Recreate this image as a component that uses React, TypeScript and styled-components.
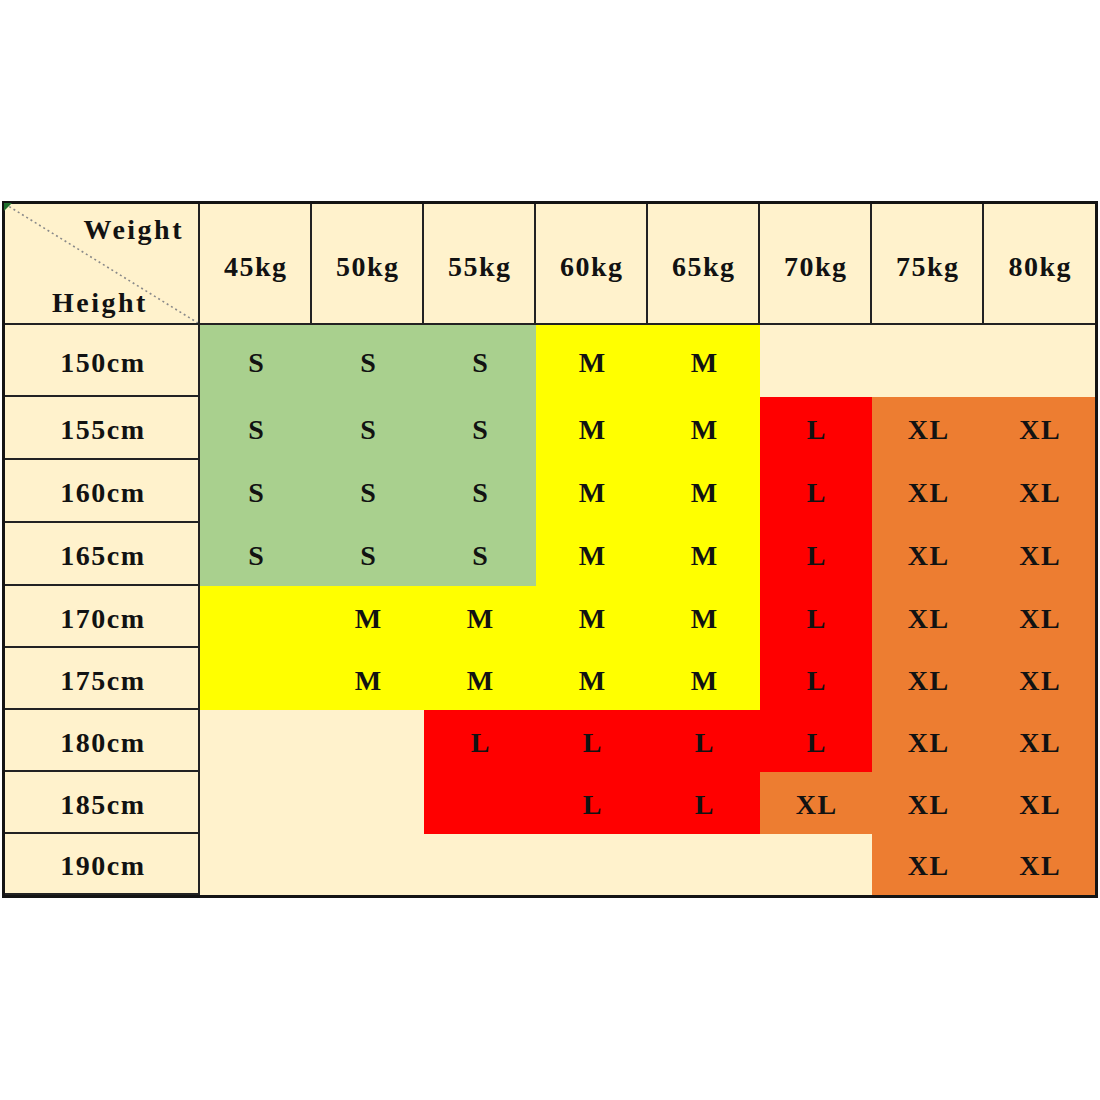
import React from "react";
import styled, { createGlobalStyle } from "styled-components";

const Global = createGlobalStyle`
  html, body { margin: 0; padding: 0; background: #ffffff; }
  body { font-family: "Liberation Serif", "Times New Roman", serif; }
`;

const COLORS: Record<string, string> = {
  c: "#FFF2CC",
  g: "#A9D08E",
  y: "#FFFF00",
  r: "#FF0000",
  o: "#ED7D31",
};

const Page = styled.div`
  padding: 201px 0 0 2px;
  height: 1100px;
  box-sizing: border-box;
`;

const Table = styled.div`
  width: 1096px;
  box-sizing: border-box;
  border: 3px solid #141414;
  background: #fff2cc;
  display: grid;
  grid-template-columns: 195px repeat(7, 112px) 111px;
  grid-template-rows: 121px 72px 63px 63px 63px 62px 62px 62px 62px 61px;
`;

const baseText = `
  font-family: "Liberation Serif", "Times New Roman", serif;
  font-weight: 700;
  font-size: 28px;
  line-height: 28px;
  letter-spacing: 1.5px;
  color: #121212;
  white-space: nowrap;
`;

const Corner = styled.div`
  position: relative;
  box-sizing: border-box;
  border-right: 2px solid #222;
  border-bottom: 2px solid #222;
  display: flex;
  flex-direction: column;
  justify-content: space-between;
  padding: 12px 14px 6px 47px;
  ${baseText}
  letter-spacing: 2.5px;
`;

const CornerTop = styled.span`
  align-self: flex-end;
`;

const CornerBottom = styled.span`
  align-self: flex-start;
`;

const Diagonal = styled.svg`
  position: absolute;
  left: 0;
  top: 0;
  width: 100%;
  height: 100%;
  pointer-events: none;
`;

const Marker = styled.div`
  position: absolute;
  left: -1px;
  top: -1px;
  width: 0;
  height: 0;
  border-top: 8px solid #1f6f2e;
  border-right: 8px solid transparent;
`;

const HeadCell = styled.div<{ $last?: boolean }>`
  box-sizing: border-box;
  border-right: ${(p) => (p.$last ? "none" : "2px solid #222")};
  border-bottom: 2px solid #222;
  display: flex;
  align-items: center;
  justify-content: center;
  padding: 6px 0 0 1.5px;
  ${baseText}
`;

const RowHead = styled.div`
  box-sizing: border-box;
  border-right: 2px solid #222;
  border-bottom: 2px solid #222;
  display: flex;
  align-items: center;
  justify-content: center;
  padding: 5px 0 0 3px;
  ${baseText}
`;

const DataCell = styled.div<{ $bg: string }>`
  background: ${(p) => p.$bg};
  display: flex;
  align-items: center;
  justify-content: center;
  padding: 3px 0 0 1.5px;
  ${baseText}
`;

const weights = ["45kg", "50kg", "55kg", "60kg", "65kg", "70kg", "75kg", "80kg"];

type Cell = [string, string];

const rows: { h: string; cells: Cell[] }[] = [
  { h: "150cm", cells: [["g", "S"], ["g", "S"], ["g", "S"], ["y", "M"], ["y", "M"], ["c", ""], ["c", ""], ["c", ""]] },
  { h: "155cm", cells: [["g", "S"], ["g", "S"], ["g", "S"], ["y", "M"], ["y", "M"], ["r", "L"], ["o", "XL"], ["o", "XL"]] },
  { h: "160cm", cells: [["g", "S"], ["g", "S"], ["g", "S"], ["y", "M"], ["y", "M"], ["r", "L"], ["o", "XL"], ["o", "XL"]] },
  { h: "165cm", cells: [["g", "S"], ["g", "S"], ["g", "S"], ["y", "M"], ["y", "M"], ["r", "L"], ["o", "XL"], ["o", "XL"]] },
  { h: "170cm", cells: [["y", ""], ["y", "M"], ["y", "M"], ["y", "M"], ["y", "M"], ["r", "L"], ["o", "XL"], ["o", "XL"]] },
  { h: "175cm", cells: [["y", ""], ["y", "M"], ["y", "M"], ["y", "M"], ["y", "M"], ["r", "L"], ["o", "XL"], ["o", "XL"]] },
  { h: "180cm", cells: [["c", ""], ["c", ""], ["r", "L"], ["r", "L"], ["r", "L"], ["r", "L"], ["o", "XL"], ["o", "XL"]] },
  { h: "185cm", cells: [["c", ""], ["c", ""], ["r", ""], ["r", "L"], ["r", "L"], ["o", "XL"], ["o", "XL"], ["o", "XL"]] },
  { h: "190cm", cells: [["c", ""], ["c", ""], ["c", ""], ["c", ""], ["c", ""], ["c", ""], ["o", "XL"], ["o", "XL"]] },
];

export default function App() {
  return (
    <>
      <Global />
      <Page>
        <Table>
          <Corner>
            <Diagonal viewBox="0 0 193 119" preserveAspectRatio="none">
              <line x1="0" y1="0" x2="193" y2="119" stroke="#8a8a8a" strokeWidth="1.6" strokeDasharray="2 3" />
            </Diagonal>
            <Marker />
            <CornerTop>Weight</CornerTop>
            <CornerBottom>Height</CornerBottom>
          </Corner>
          {weights.map((w, i) => (
            <HeadCell key={w} $last={i === weights.length - 1}>
              {w}
            </HeadCell>
          ))}
          {rows.map((r) => (
            <React.Fragment key={r.h}>
              <RowHead>{r.h}</RowHead>
              {r.cells.map(([c, t], i) => (
                <DataCell key={i} $bg={COLORS[c]}>
                  {t}
                </DataCell>
              ))}
            </React.Fragment>
          ))}
        </Table>
      </Page>
    </>
  );
}
